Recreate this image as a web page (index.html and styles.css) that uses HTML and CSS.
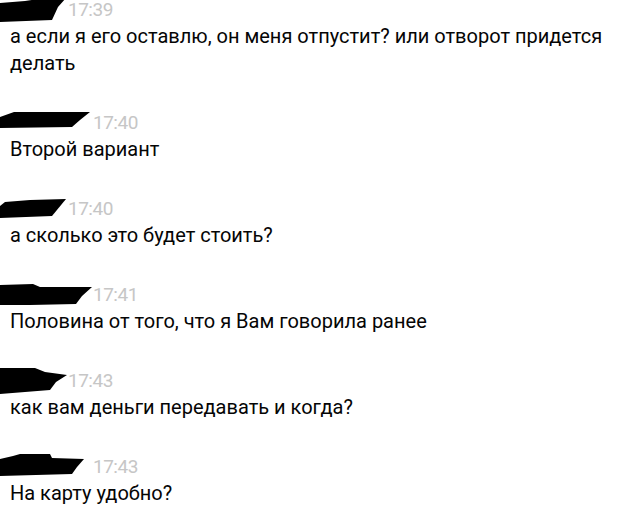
FILE: index.html
```html
<!DOCTYPE html>
<html lang="ru">
  <head>
    <meta charset="utf-8">
    <link rel="stylesheet" href="styles.css">
  </head>
  <body>
    <div class="chat">

      <div class="msg first">
        <div class="head">
          <svg class="name short" viewBox="0 0 66 22"><polygon points="0,4 25,2 45,-1 66,-1 58,8 52,21 0,23"/></svg>
          <span class="time">17:39</span>
        </div>
        <div class="text">а если я его оставлю, он меня отпустит? или отворот придется делать</div>
      </div>

      <div class="msg">
        <div class="head">
          <svg class="name long" viewBox="0 0 91 22"><polygon points="0,5 14,0 90,0 80,8 72,15 0,16"/></svg>
          <span class="time">17:40</span>
        </div>
        <div class="text">Второй вариант</div>
      </div>

      <div class="msg">
        <div class="head">
          <svg class="name short" viewBox="0 0 66 22"><polygon points="0,8 5,4 30,2 66,1 52,18 0,20"/></svg>
          <span class="time">17:40</span>
        </div>
        <div class="text">а сколько это будет стоить?</div>
      </div>

      <div class="msg">
        <div class="head">
          <svg class="name long" viewBox="0 0 91 22"><polygon points="0,1 33,0 40,3 92,3 82,12 76,20 30,21 0,21"/></svg>
          <span class="time">17:41</span>
        </div>
        <div class="text">Половина от того, что я Вам говорила ранее</div>
      </div>

      <div class="msg">
        <div class="head">
          <svg class="name short" viewBox="0 0 66 22"><polygon points="0,-2 35,-2 45,2 67,5 56,12 50,20 25,22 0,24"/></svg>
          <span class="time">17:43</span>
        </div>
        <div class="text">как вам деньги передавать и когда?</div>
      </div>

      <div class="msg">
        <div class="head">
          <svg class="name long" viewBox="0 0 91 22"><polygon points="0,3 13,0 20,-2 50,-2 52,2 84,3 77,11 72,18 0,20"/></svg>
          <span class="time">17:43</span>
        </div>
        <div class="text">На карту удобно?</div>
      </div>

    </div>
  </body>
</html>
```

FILE: styles.css
```css
body {
  margin: 0;
  background: #fff;
  font-family: Roboto, "Noto Sans", sans-serif;
  overflow: hidden;
}
.chat {
  display: flex;
  flex-direction: column;
}
.msg {
  margin-bottom: 35px;
}
.msg:last-child {
  margin-bottom: 0;
}
.msg.first {
  margin-top: -1px;
}
.head {
  display: flex;
  align-items: flex-start;
  height: 22px;
}
.name {
  height: 22px;
  fill: #000;
  overflow: visible;
}
.name.short {
  width: 66px;
}
.name.long {
  width: 91px;
}
.time {
  margin-left: 2px;
  font-size: 19px;
  line-height: 22px;
  letter-spacing: -0.5px;
  color: #c6c6c6;
}
.text {
  margin-top: 2px;
  padding-left: 10px;
  font-size: 20px;
  line-height: 27px;
  color: #050505;
}
```
